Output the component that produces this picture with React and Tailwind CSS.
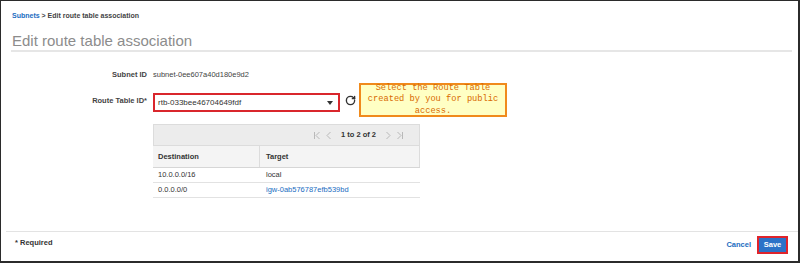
import { RotateCw } from 'lucide-react';

function FirstIcon() {
  return (
    <svg width="8" height="9" viewBox="0 0 8 9" fill="none" stroke="#b9b9b9" strokeWidth="1">
      <path d="M1.5 1v7" />
      <path d="M6.5 1 3 4.5 6.5 8" />
    </svg>
  );
}

function PrevIcon() {
  return (
    <svg width="6" height="9" viewBox="0 0 6 9" fill="none" stroke="#b9b9b9" strokeWidth="1">
      <path d="M4.5 1 1 4.5 4.5 8" />
    </svg>
  );
}

function NextIcon() {
  return (
    <svg width="6" height="9" viewBox="0 0 6 9" fill="none" stroke="#b9b9b9" strokeWidth="1">
      <path d="M1.5 1 5 4.5 1.5 8" />
    </svg>
  );
}

function LastIcon() {
  return (
    <svg width="8" height="9" viewBox="0 0 8 9" fill="none" stroke="#b9b9b9" strokeWidth="1">
      <path d="M1.5 1 5 4.5 1.5 8" />
      <path d="M6.5 1v7" />
    </svg>
  );
}

const routes = [
  { dest: '10.0.0.0/16', target: 'local', link: false },
  { dest: '0.0.0.0/0', target: 'igw-0ab576787efb539bd', link: true },
];

export default function App() {
  return (
    <div className="w-[800px] h-[263px] bg-white border-t border-l border-r-2 border-b-2 border-[#2b2b2b] flex flex-col font-['Liberation_Sans',Arial,sans-serif] text-[#444]">
      {/* breadcrumb */}
      <div className="pl-[11px] pt-[10px] text-[7px] leading-[10px] font-bold">
        <a className="text-[#1a6dbf]">Subnets</a> &gt; Edit route table association
      </div>
      <h1 className="mt-[11px] ml-[10px] mr-[6px] pl-[1px] text-[15px] leading-[18px] text-[#8c8c8c] border-b-2 border-[#e6e6e6]">
        Edit route table association
      </h1>

      <div className="flex-1 flex flex-col">
        <div className="mt-[18px] flex items-center text-[7.5px] leading-[10px]">
          <span className="w-[146px] text-right font-bold">Subnet ID</span>
          <span className="ml-[6px]">subnet-0ee607a40d180e9d2</span>
        </div>

        <div className="mt-[3px] flex items-start">
          <span className="w-[146px] mt-[13px] text-right font-bold text-[7.5px] leading-[10px]">Route Table ID*</span>
          <div className="ml-[6px] mt-[10px] w-[187px] h-[19px] border-2 border-[#d9262c] flex items-center justify-between pl-[3px] pr-[5px] text-[8px] text-[#333]">
            <span>rtb-033bee46704649fdf</span>
            <svg width="6" height="4" viewBox="0 0 6 4">
              <path d="M0 0h6L3 4z" fill="#333" />
            </svg>
          </div>
          <RotateCw className="ml-[5px] mt-[12px]" size={11} strokeWidth={3} color="#333" />
          <div className="ml-[3px] w-[148px] h-[34px] border-2 border-[#f08a1c] bg-[#ffffc4] flex items-center justify-center text-center font-['Liberation_Mono',monospace] text-[8.7px] leading-[11.5px] text-[#d86a00]">
            Select the Route Table
            <br />
            created by you for public
            <br />
            access.
          </div>
        </div>

        <div className="mt-[7px] ml-[152px] w-[267px] text-[7.5px] leading-[10px]">
          <div className="h-[22px] bg-[#ececec] border border-[#dcdcdc] flex items-center justify-end pr-[15px] gap-[5px]">
            <FirstIcon />
            <PrevIcon />
            <span className="mx-[4px] font-bold text-[#333]">1 to 2 of 2</span>
            <NextIcon />
            <LastIcon />
          </div>
          <div className="grid grid-cols-[107px_1fr] h-[22px] bg-[#f4f4f4] border-b border-[#d6d6d6] font-bold text-[#333]">
            <div className="flex items-center pl-[5px] border-r border-[#dcdcdc]">Destination</div>
            <div className="flex items-center pl-[6px] border-r border-[#dcdcdc]">Target</div>
          </div>
          {routes.map((r) => (
            <div key={r.dest} className="grid grid-cols-[107px_1fr] h-[15px] border-b border-[#e2e2e2] text-[#333]">
              <div className="flex items-center pl-[5px]">{r.dest}</div>
              <div className={r.link ? 'flex items-center pl-[6px] text-[#1a6dbf]' : 'flex items-center pl-[6px]'}>{r.target}</div>
            </div>
          ))}
        </div>
      </div>

      <div className="h-[30px] ml-[5px] border-t border-[#e3e3e3] flex items-start justify-between pr-[10px]">
        <span className="pl-[9px] pt-[6px] text-[7.5px] leading-[10px] font-bold text-[#333]">* Required</span>
        <div className="flex items-start">
          <a className="mt-[8px] text-[7.5px] leading-[10px] font-bold text-[#1a6dbf]">Cancel</a>
          <div className="ml-[6px] mt-[4px] w-[31px] h-[18px] border-2 border-[#e0242b] bg-[#2c72c7] flex items-center justify-center text-white font-bold text-[7.5px]">
            Save
          </div>
        </div>
      </div>
    </div>
  );
}
